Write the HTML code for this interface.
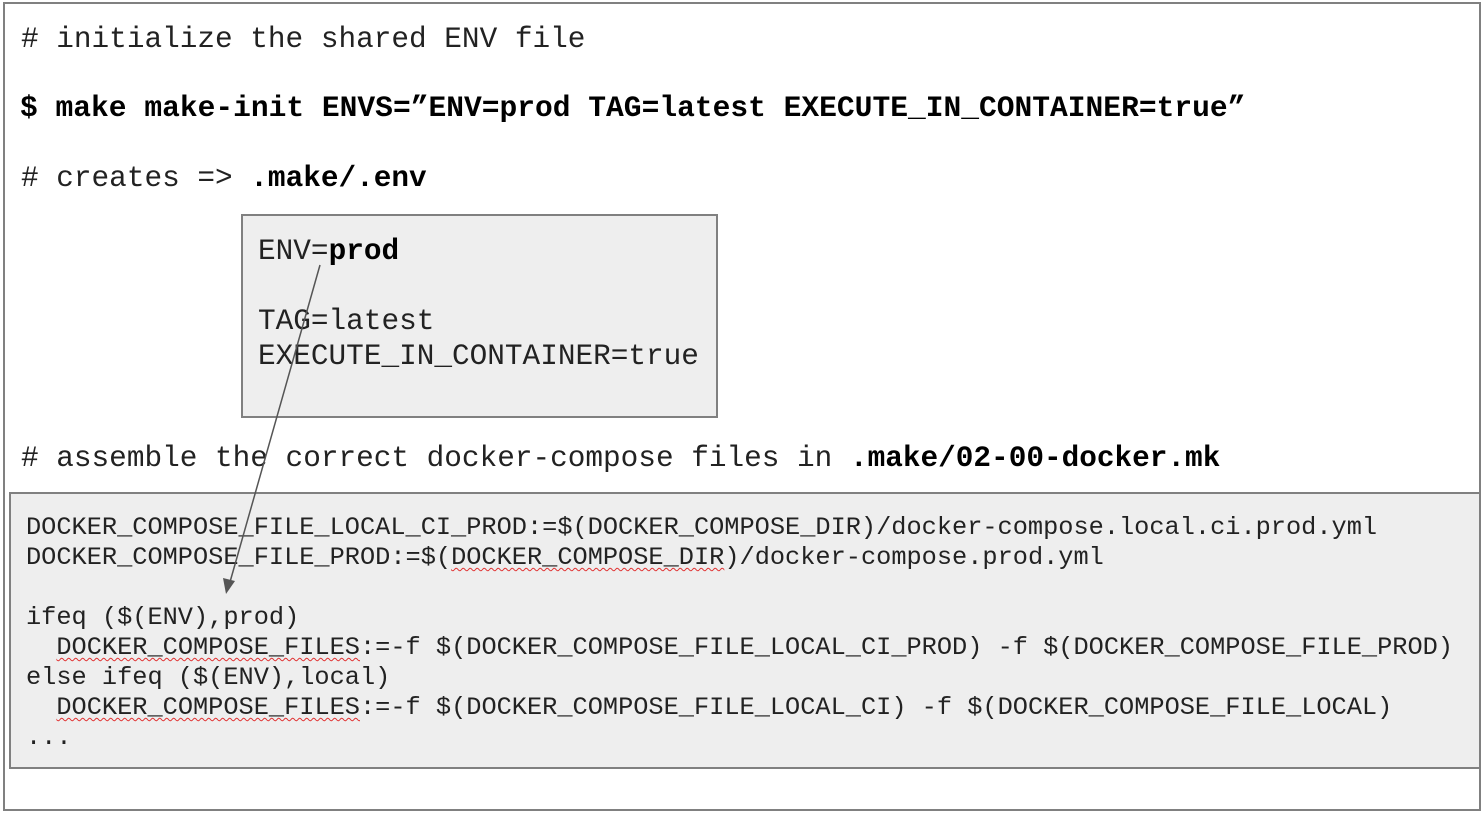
<!DOCTYPE html>
<html><head><meta charset="utf-8"><style>
body{margin:0;width:1483px;height:813px;background:#fff;position:relative;overflow:hidden;font-family:"Liberation Mono",monospace;color:#222}
.a{position:absolute;white-space:pre;line-height:1}
.b{font-weight:bold;color:#000}
.box{position:absolute;border:2px solid #808080;box-sizing:border-box}
.w{text-decoration:underline wavy #e03030;text-decoration-thickness:1px;text-underline-offset:3px}
</style></head><body>
<div class="box" style="left:3px;top:2px;width:1478px;height:809px"></div>
<div class="a" style="left:21px;top:25px;font-size:29.4px"># initialize the shared ENV file</div>
<div class="a b" style="left:20px;top:94px;font-size:29.6px">$ make make-init ENVS=”ENV=prod TAG=latest EXECUTE_IN_CONTAINER=true”</div>
<div class="a" style="left:21px;top:164px;font-size:29.4px"># creates =&gt; <span class="b">.make/.env</span></div>
<div class="box" style="left:241px;top:214px;width:477px;height:204px;background:#eeeeee"></div>
<div class="a" style="left:258px;top:237px;font-size:29.4px">ENV=<span class="b">prod</span></div>
<div class="a" style="left:258px;top:307px;font-size:29.4px">TAG=latest</div>
<div class="a" style="left:258px;top:342px;font-size:29.4px">EXECUTE_IN_CONTAINER=true</div>
<div class="a" style="left:21px;top:444px;font-size:29.4px"># assemble the correct docker-compose files in <span class="b">.make/02-00-docker.mk</span></div>
<div class="box" style="left:9px;top:492px;width:1472px;height:277px;background:#eeeeee"></div>
<div class="a" style="left:26px;top:513px;font-size:25.3px;line-height:30px">DOCKER_COMPOSE_FILE_LOCAL_CI_PROD:=$(DOCKER_COMPOSE_DIR)/docker-compose.local.ci.prod.yml
DOCKER_COMPOSE_FILE_PROD:=$(<span class="w">DOCKER_COMPOSE_DIR</span>)/docker-compose.prod.yml

ifeq ($(ENV),prod)
  <span class="w">DOCKER_COMPOSE_FILES</span>:=-f $(DOCKER_COMPOSE_FILE_LOCAL_CI_PROD) -f $(DOCKER_COMPOSE_FILE_PROD)
else ifeq ($(ENV),local)
  <span class="w">DOCKER_COMPOSE_FILES</span>:=-f $(DOCKER_COMPOSE_FILE_LOCAL_CI) -f $(DOCKER_COMPOSE_FILE_LOCAL)
...</div>
<svg style="position:absolute;left:0;top:0" width="1483" height="813">
<line x1="320" y1="265" x2="230" y2="582" stroke="#555" stroke-width="1.5"/>
<polygon points="226,594 223,578 235,581" fill="#555"/>
</svg>
</body></html>
